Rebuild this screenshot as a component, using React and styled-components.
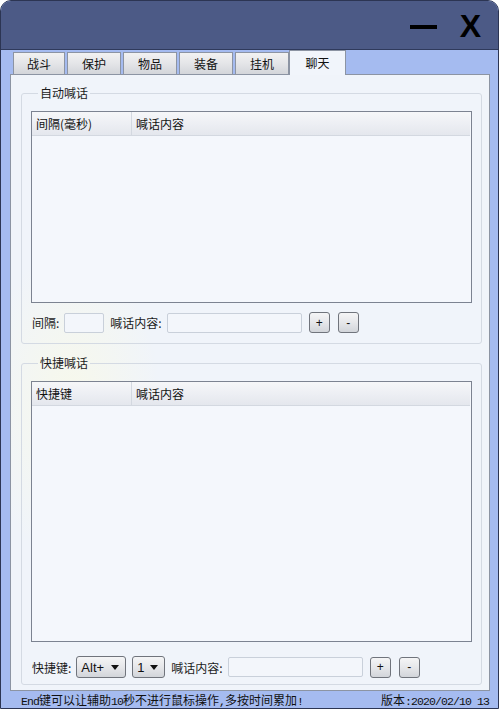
import styled, { createGlobalStyle } from 'styled-components';

const GlobalStyle = createGlobalStyle`
  html, body {
    margin: 0;
    padding: 0;
    background: #ffffff;
  }
  * {
    box-sizing: border-box;
  }
`;

const cjk = `"Noto Sans CJK SC", "Liberation Sans", sans-serif`;

const Window = styled.div`
  width: 499px;
  height: 709px;
  display: flex;
  flex-direction: column;
  border: 1px solid #2c3553;
  border-radius: 11px 11px 0 0;
  overflow: hidden;
  background: #a5bbf0;
  font-family: ${cjk};
  font-size: 12px;
  color: #1b1b1b;
`;

const TitleBar = styled.div`
  height: 49px;
  flex: none;
  display: flex;
  align-items: center;
  justify-content: flex-end;
  padding-right: 17px;
  background: #4c5a86;
  border-bottom: 1px solid #2f3a5c;
`;

const Minimize = styled.span`
  width: 27px;
  height: 4px;
  margin-top: 4px;
  background: #000000;
`;

const Close = styled.span`
  font-family: "Liberation Sans", Arial, sans-serif;
  font-weight: bold;
  font-size: 32px;
  line-height: 1;
  color: #000000;
  margin-left: 23px;
  margin-top: 2px;
`;

const Body = styled.div`
  flex: 1;
  display: flex;
  flex-direction: column;
  padding: 0 8px 0 9px;
`;

const Tabs = styled.div`
  height: 25px;
  display: flex;
  align-items: flex-end;
  padding-left: 1px;
  gap: 2px;
  margin-bottom: -1px;
  position: relative;
  z-index: 1;
`;

const Tab = styled.div`
  width: ${p => (p.$active ? 57 : 54)}px;
  height: ${p => (p.$active ? 25 : 23)}px;
  margin-left: ${p => (p.$active ? -2 : 0)}px;
  display: flex;
  align-items: center;
  justify-content: center;
  padding-bottom: 1px;
  border: 1px solid #8c94a3;
  border-bottom: ${p => (p.$active ? 'none' : '1px solid #8c94a3')};
  background: ${p =>
    p.$active ? '#f1f5fb' : 'linear-gradient(#f2f2f2, #e4e5e8 50%, #d3d5da)'};
  color: #111111;

  &:first-child {
    width: 52px;
    margin-left: 2px;
  }
`;

const Panel = styled.div`
  height: 617px;
  flex: none;
  border: 1px solid #8c94a3;
  background:
    radial-gradient(ellipse 90px 160px at 60px 330px, rgba(250, 250, 228, 0.7), rgba(250, 250, 228, 0) 100%),
    #f0f4fa;
  padding: 11px 7px 0 10px;
  display: flex;
  flex-direction: column;
`;

const Group = styled.fieldset`
  margin: 0 0 ${p => p.$mb}px 0;
  padding: 11px 9px 0 9px;
  border: 1px solid #d4dae3;
  border-radius: 3px;
  height: ${p => p.$h}px;
  min-width: 0;
`;

const Legend = styled.legend`
  padding: 0 2px;
  margin-left: 7px;
  line-height: 14px;
  font-size: 12px;
  color: #1b1b1b;
`;

const List = styled.div`
  height: ${p => p.$h}px;
  border: 1px solid #7c8391;
  background: #f4f7fc;
`;

const ListHeader = styled.div`
  height: 24px;
  display: flex;
  background: linear-gradient(#f6f7f9, #eceef3 55%, #e4e7ed);
  border-bottom: 1px solid #d3d8e0;
  margin-right: 1px;
`;

const HeaderCell = styled.div`
  width: ${p => (p.$w ? `${p.$w}px` : 'auto')};
  flex: ${p => (p.$w ? 'none' : 1)};
  display: flex;
  align-items: center;
  padding-left: 4px;
  border-right: ${p => (p.$w ? '1px solid #d3d8e0' : 'none')};
  color: #111111;
`;

const Row = styled.div`
  display: flex;
  align-items: center;
  margin-top: ${p => p.$mt}px;
  padding-left: 1px;
`;

const Label = styled.span`
  margin-left: ${p => p.$ml || 0}px;
  color: #1b1b1b;
  white-space: nowrap;
`;

const Input = styled.div`
  width: ${p => p.$w}px;
  height: 20px;
  margin-left: ${p => p.$ml}px;
  border: 1px solid #c9d0da;
  border-radius: 2px;
  background: #f3f6fb;
`;

const Button = styled.div`
  width: 21px;
  height: 21px;
  margin-left: ${p => p.$ml}px;
  display: flex;
  align-items: center;
  justify-content: center;
  border: 1px solid #70747c;
  border-radius: 3px;
  background: linear-gradient(#f5f5f6, #e6e7ea 50%, #d2d5da);
  font-family: "Liberation Sans", Arial, sans-serif;
  font-size: 12px;
  color: #111111;
`;

const Select = styled.div`
  width: ${p => p.$w}px;
  height: 22px;
  margin-left: ${p => p.$ml}px;
  display: flex;
  align-items: center;
  justify-content: space-between;
  padding: 0 6px 0 4px;
  border: 1px solid #70747c;
  border-radius: 3px;
  background: linear-gradient(#f5f5f6, #e6e7ea 50%, #d2d5da);
  font-family: "Liberation Sans", Arial, sans-serif;
  font-size: 13px;
  color: #111111;
`;

const Arrow = styled.span`
  width: 0;
  height: 0;
  border-left: 4px solid transparent;
  border-right: 4px solid transparent;
  border-top: 5px solid #111111;
`;

const StatusBar = styled.div`
  flex: 1;
  display: flex;
  align-items: center;
  justify-content: space-between;
  padding: 0 1px 0 11px;
  font-family: "Noto Sans CJK SC", sans-serif;
  font-size: 12px;
  color: #111111;
  white-space: nowrap;
  overflow: hidden;
`;

const Half = styled.span`
  font-family: "Liberation Mono", monospace;
  font-size: 11.5px;
  letter-spacing: -0.9px;
`;

const tabs = ['战斗', '保护', '物品', '装备', '挂机', '聊天'];

export default function App() {
  return (
    <>
      <GlobalStyle />
      <Window>
        <TitleBar>
          <Minimize />
          <Close>X</Close>
        </TitleBar>
        <Body>
          <Tabs>
            {tabs.map(t => (
              <Tab key={t} $active={t === '聊天'}>
                {t}
              </Tab>
            ))}
          </Tabs>
          <Panel>
            <Group $h={258} $mb={12}>
              <Legend>自动喊话</Legend>
              <List $h={192}>
                <ListHeader>
                  <HeaderCell $w={100}>间隔(毫秒)</HeaderCell>
                  <HeaderCell>喊话内容</HeaderCell>
                </ListHeader>
              </List>
              <Row $mt={9}>
                <Label>间隔:</Label>
                <Input $w={40} $ml={5} />
                <Label $ml={6}>喊话内容:</Label>
                <Input $w={135} $ml={5} />
                <Button $ml={7}>+</Button>
                <Button $ml={8}>-</Button>
              </Row>
            </Group>
            <Group $h={329} $mb={0}>
              <Legend>快捷喊话</Legend>
              <List $h={261}>
                <ListHeader>
                  <HeaderCell $w={100}>快捷键</HeaderCell>
                  <HeaderCell>喊话内容</HeaderCell>
                </ListHeader>
              </List>
              <Row $mt={14}>
                <Label>快捷键:</Label>
                <Select $w={50} $ml={5}>
                  Alt+
                  <Arrow />
                </Select>
                <Select $w={33} $ml={6}>
                  1
                  <Arrow />
                </Select>
                <Label $ml={6}>喊话内容:</Label>
                <Input $w={135} $ml={5} />
                <Button $ml={7}>+</Button>
                <Button $ml={8}>-</Button>
              </Row>
            </Group>
          </Panel>
          <StatusBar>
            <span>
              <Half>End</Half>键可以让辅助<Half>10</Half>秒不进行鼠标操作<Half>,</Half>多按时间累加<Half>!</Half>
            </span>
            <span>
              版本<Half>:2020/02/10 13</Half>
            </span>
          </StatusBar>
        </Body>
      </Window>
    </>
  );
}
